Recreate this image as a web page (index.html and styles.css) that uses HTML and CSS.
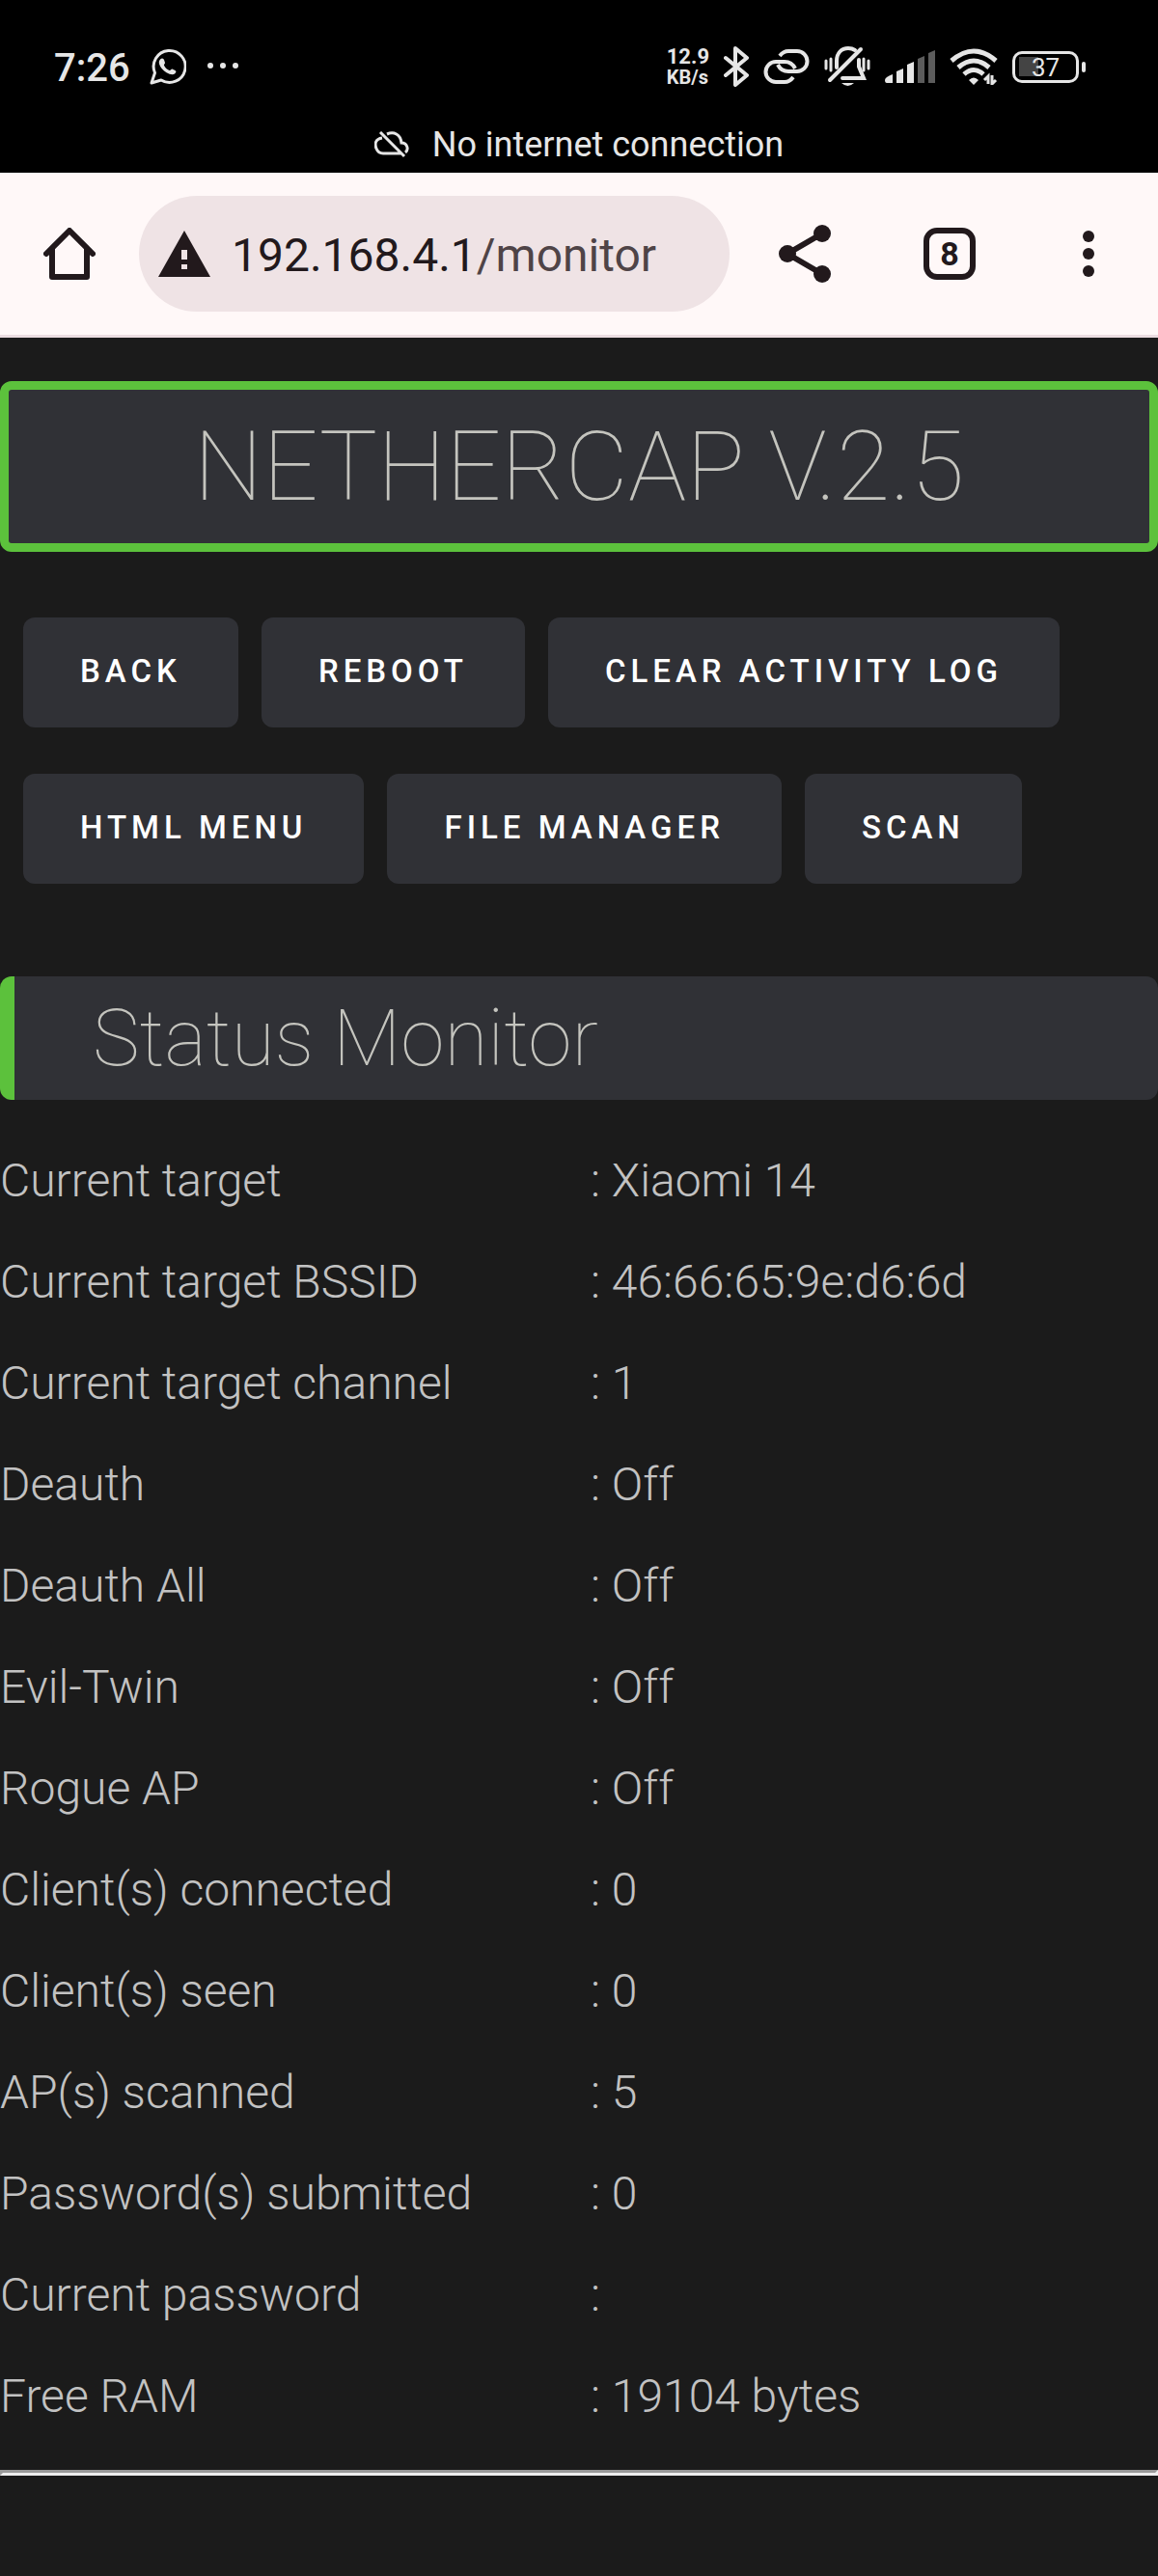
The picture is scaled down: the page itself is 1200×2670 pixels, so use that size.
FILE: index.html
```html
<!DOCTYPE html>
<html lang="en">
<head>
<meta charset="utf-8">
<meta name="viewport" content="width=device-width">
<title>NETHERCAP V.2.5</title>
<link rel="stylesheet" href="styles.css">
</head>
<body>
<div class="system">
  <div class="system-row">
    <span class="clock">7:26</span>
    <svg class="icon" width="38" height="38" viewBox="0 0 38 38" fill="none" stroke="currentColor" stroke-width="3"><path d="M2 36l3.500-10.500a16.500 16.500 0 1 1 6.500 7.500z" stroke-linejoin="round"/><path d="M11 11.500c2-2 3.500-1 4 .5l1 3c.2 1-1.500 1.800-1 2.800 1.200 2.500 3 4.200 5.500 5.200 1.200.4 2-1.800 3-1.400l3 1.400c1.500.8 1 2-.2 3.200-2 1.800-5.300 1-8.800-1-4-2.500-6.500-5.800-7.500-9-.5-2 0-3.500 1-4.700z" fill="currentColor" stroke="none"/></svg>
    <svg class="icon" width="36" height="8" viewBox="0 0 36 8" fill="currentColor"><circle cx="5" cy="3" r="3"/><circle cx="18" cy="3" r="3"/><circle cx="31" cy="3" r="3"/></svg>
    <div class="indicators">
      <span class="speed">12.9<br><span class="unit">KB/s</span></span>
      <svg class="icon" width="26" height="42" viewBox="0 0 26 42" fill="none" stroke="currentColor" stroke-width="4" stroke-linecap="round" stroke-linejoin="round"><path d="M2 12l22 18-12 10V2l12 10L2 30"/></svg>
      <svg class="icon" width="48" height="38" viewBox="0 0 48 38" fill="none" stroke="currentColor" stroke-width="4"><path d="M17 8c3-4 6-5 9-5h9a10.500 10.500 0 0 1 0 21h-9c-5 0-9-3-11-7"/><path d="M31 30c-3 4-6 5-9 5h-9a10.500 10.500 0 0 1 0-21h9c5 0 9 3 11 7"/></svg>
      <svg class="icon" width="48" height="42" viewBox="0 0 48 42" fill="none" stroke="currentColor" stroke-width="3" stroke-linecap="round"><path d="M6 35L38 3" stroke-width="4"/><path d="M13 22V15c0-8 5-13 12-13q4 0 7 2M36 14v7l5 12H19" stroke-width="4"/><path d="M2 15v8M7 13v12M41 13v12M46 15v8"/><path d="M18 38h13q-6.500 6-13 0z" fill="currentColor" stroke="none"/></svg>
      <svg class="icon" width="52" height="34" viewBox="0 0 52 34" fill="currentColor"><path d="M0 31q0-3 8-6v9H2q-2 0-2-3zM12 22l7-3v15h-7zM23 15l7-3v22h-7z"/><path d="M34 9l7-3v28h-7zM45 3l7-3v34h-7z" opacity=".4"/></svg>
      <svg class="icon" width="50" height="38" viewBox="0 0 50 38" fill="none" stroke="currentColor" stroke-width="5"><path d="M2 13q23-20 46 0M9 20q16-14 32 0M15 27q10-9 20 0"/><path d="M20 33q5-5 10 0l-5 5z" fill="currentColor" stroke="none"/><path d="M40 37v-8l-4 4M44 28v9l4-4" stroke-width="3"/></svg>
      <span class="battery">37</span>
    </div>
  </div>
  <div class="notice">
    <svg class="icon" width="36" height="28" viewBox="0 0 36 28" fill="none" stroke="currentColor" stroke-width="3"><path d="M6 1l25 25M13 3c7-3 14 0 15 9 6 0 8 7 4 10M8 7C1 8 0 13 2 18q2 5 7 5h19"/></svg>
    <span>No internet connection</span>
  </div>
</div>

<header class="toolbar">
  <button class="tool" type="button" aria-label="Home"><svg width="54" height="54" viewBox="0 0 54 54" fill="none" stroke="currentColor" stroke-width="6" stroke-linecap="round" stroke-linejoin="round"><path d="M3 27L27 3l24 24M9 22v29h36V22"/></svg></button>
  <div class="address">
    <svg width="54" height="48" viewBox="0 0 54 48" fill="currentColor"><path fill-rule="evenodd" d="M27 0l27 48H0zM24 20v10h6V20zM24 35v5h6v-5z"/></svg>
    <div class="url" role="textbox" aria-label="Address" contenteditable="true" spellcheck="false">192.168.4.1<span class="path">/monitor</span></div>
  </div>
  <button class="tool share" type="button" aria-label="Share"><svg width="54" height="60" viewBox="0 0 54 60" fill="currentColor"><path d="M45 9L9 30l36 21" fill="none" stroke="currentColor" stroke-width="6"/><circle cx="45" cy="9" r="9"/><circle cx="9" cy="30" r="9"/><circle cx="45" cy="51" r="9"/></svg></button>
  <button class="tool" type="button" aria-label="8 open tabs"><span class="tabs">8</span></button>
  <button class="tool" type="button" aria-label="Menu"><svg width="12" height="48" viewBox="0 0 12 48" fill="currentColor"><circle cx="6" cy="6" r="6"/><circle cx="6" cy="24" r="6"/><circle cx="6" cy="42" r="6"/></svg></button>
</header>

<main>
  <h1 class="title">NETHERCAP V.2.5</h1>
  <nav class="actions">
    <div class="actions-row">
      <button class="action" type="button">BACK</button>
      <button class="action" type="button">REBOOT</button>
      <button class="action" type="button">CLEAR ACTIVITY LOG</button>
    </div>
    <div class="actions-row">
      <button class="action" type="button">HTML MENU</button>
      <button class="action" type="button">FILE MANAGER</button>
      <button class="action" type="button">SCAN</button>
    </div>
  </nav>
  <h2 class="section">Status Monitor</h2>
  <table class="status">
    <tbody>
      <tr><th scope="row">Current target</th><td>: Xiaomi 14</td></tr>
      <tr><th scope="row">Current target BSSID</th><td>: 46:66:65:9e:d6:6d</td></tr>
      <tr><th scope="row">Current target channel</th><td>: 1</td></tr>
      <tr><th scope="row">Deauth</th><td>: Off</td></tr>
      <tr><th scope="row">Deauth All</th><td>: Off</td></tr>
      <tr><th scope="row">Evil-Twin</th><td>: Off</td></tr>
      <tr><th scope="row">Rogue AP</th><td>: Off</td></tr>
      <tr><th scope="row">Client(s) connected</th><td>: 0</td></tr>
      <tr><th scope="row">Client(s) seen</th><td>: 0</td></tr>
      <tr><th scope="row">AP(s) scanned</th><td>: 5</td></tr>
      <tr><th scope="row">Password(s) submitted</th><td>: 0</td></tr>
      <tr><th scope="row">Current password</th><td>:</td></tr>
      <tr><th scope="row">Free RAM</th><td>: 19104 bytes</td></tr>
    </tbody>
  </table>
  <hr class="rule">
</main>
</body>
</html>
```
FILE: styles.css
```css
* { box-sizing: border-box; }

body {
  margin: 0;
  background: #1b1b1b;
  color: #c2c2c2;
  font-family: Roboto, "Liberation Sans", sans-serif;
  font-size: 48px;
  font-weight: 300;
}

svg { display: block; flex: none; }

button { font-family: inherit; border: 0; cursor: pointer; }

/* phone status bar */
.system {
  background: #000;
  color: #e6e6e6;
  padding-top: 39px;
}

.system-row {
  display: flex;
  align-items: center;
  gap: 20px;
  height: 60px;
  padding: 0 75px 0 56px;
}

.clock { padding-top: 2px; font-size: 40px; font-weight: 500; }

.indicators {
  display: flex;
  align-items: center;
  gap: 15px;
  margin-left: auto;
}

.speed {
  font-size: 22px;
  font-weight: 700;
  line-height: 21px;
}

.unit { font-size: 20px; }

.battery {
  position: relative;
  width: 69px;
  height: 33px;
  margin-right: 7px;
  border: 3px solid #e6e6e6;
  border-radius: 10px;
  background: linear-gradient(#444, #444) 4px center / 20px 20px no-repeat;
  font-size: 26px;
  font-weight: 400;
  line-height: 29px;
  text-align: center;
}

.battery::after {
  content: "";
  position: absolute;
  right: -10px;
  top: 8px;
  width: 4px;
  height: 11px;
  border-radius: 2px;
  background: #e6e6e6;
}

.notice {
  display: flex;
  align-items: center;
  justify-content: center;
  gap: 24px;
  height: 60px;
  margin-top: 20px;
  padding-top: 2px;
  font-size: 36px;
  font-weight: 400;
}

/* browser toolbar */
.toolbar {
  display: flex;
  align-items: center;
  background: #fff8f8;
  border-bottom: 3px solid #ebdde1;
  color: #22191c;
  padding: 24px 0;
}

.tool {
  display: flex;
  align-items: center;
  justify-content: center;
  width: 144px;
  height: 120px;
  padding: 0;
  background: none;
  color: inherit;
}

.share { width: 156px; }

.address {
  flex: 1;
  display: flex;
  align-items: center;
  gap: 22px;
  height: 120px;
  padding: 0 20px;
  border-radius: 60px;
  background: #efe3e5;
}

.url { padding-top: 2px; font-weight: 400; white-space: nowrap; }

.path { color: #4f4447; }

.tabs {
  width: 54px;
  height: 54px;
  border: 6px solid currentColor;
  border-radius: 14px;
  font-size: 34px;
  font-weight: 700;
  line-height: 42px;
}

/* page */
.title {
  margin: 45px 0 0;
  padding: 19px 0;
  border: 9px solid #5cc13c;
  border-radius: 12px;
  background: #303136;
  color: #c4c4be;
  font-size: 101px;
  font-weight: 100;
  line-height: 121px;
  text-align: center;
}

.actions {
  display: flex;
  flex-direction: column;
  gap: 48px;
  padding: 68px 24px 96px;
}

.actions-row { display: flex; gap: 24px; }

.action {
  height: 114px;
  padding: 0 59px 3px;
  border-radius: 12px;
  background: #303136;
  color: #fff;
  font-size: 33px;
  font-weight: 500;
  letter-spacing: 5px;
  white-space: nowrap;
}

.section {
  margin: 0;
  padding-left: 81px;
  border-left: 15px solid #5cc13c;
  border-radius: 12px;
  background: #303136;
  color: #c4c4be;
  font-size: 82px;
  font-weight: 100;
  line-height: 128px;
}

.status {
  width: 100%;
  margin-top: 31px;
  border-collapse: collapse;
  table-layout: fixed;
  line-height: 57px;
}

.status th,
.status td {
  padding: 24px 0;
  font-weight: 300;
  text-align: left;
}

.status th { width: 51%; }

.rule {
  height: 6px;
  margin: 24px 0 0;
  border: 3px inset #eee;
}
```
